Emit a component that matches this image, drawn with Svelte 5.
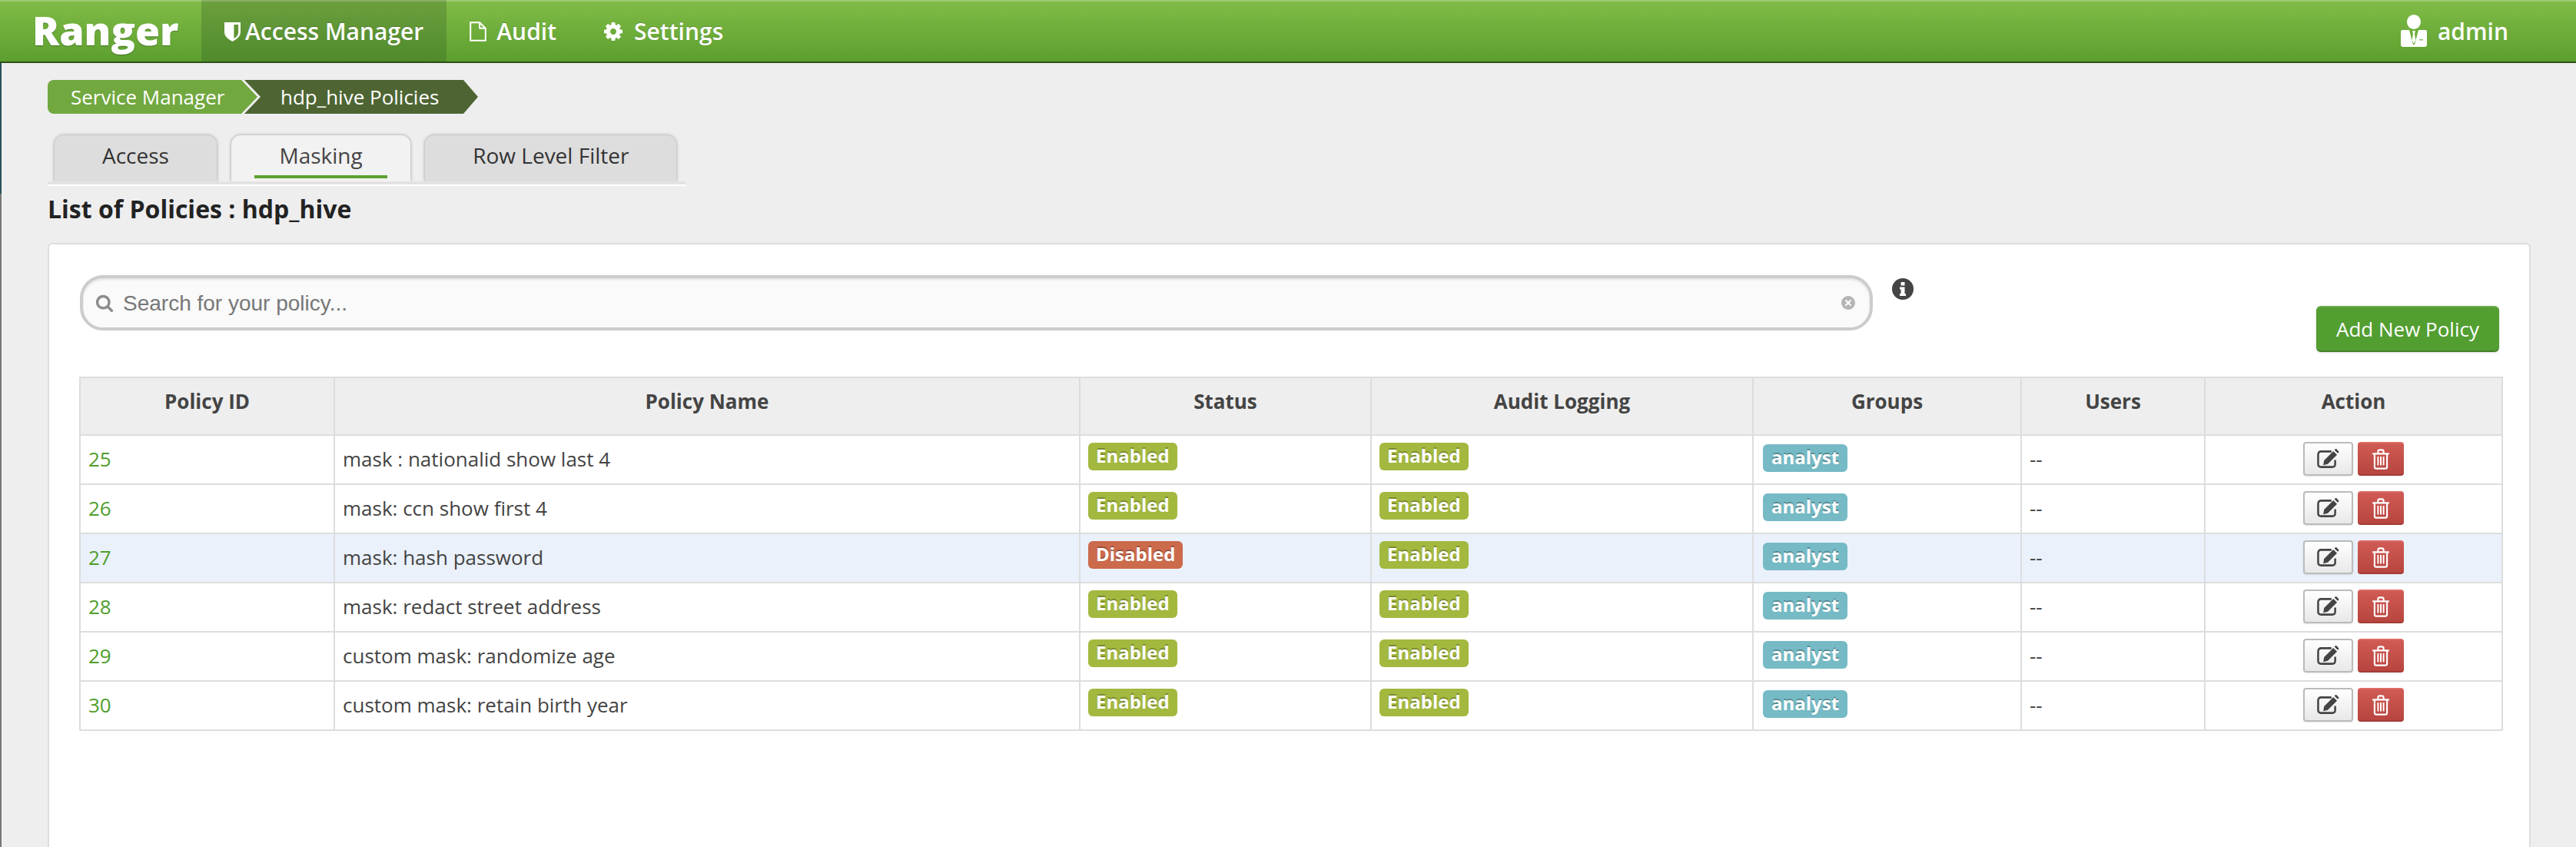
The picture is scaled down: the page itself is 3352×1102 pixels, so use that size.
<script>
  const policies = [
    { id: 25, name: 'mask : nationalid show last 4', enabled: true },
    { id: 26, name: 'mask: ccn show first 4', enabled: true },
    { id: 27, name: 'mask: hash password', enabled: false },
    { id: 28, name: 'mask: redact street address', enabled: true },
    { id: 29, name: 'custom mask: randomize age', enabled: true },
    { id: 30, name: 'custom mask: retain birth year', enabled: true }
  ];
  const columns = [
    { title: 'Policy ID', width: 331 },
    { title: 'Policy Name', width: 970 },
    { title: 'Status', width: 379 },
    { title: 'Audit Logging', width: 497 },
    { title: 'Groups', width: 349 },
    { title: 'Users', width: 239 },
    { title: 'Action', width: 387 }
  ];
  const gear = 'M1152 896q0-106-75-181t-181-75-181 75-75 181 75 181 181 75 181-75 75-181zm512-109v222q0 12-8 23t-20 13l-185 28q-19 54-39 91 35 50 107 138 10 12 10 25t-9 23q-27 37-99 108t-94 71q-12 0-26-9l-138-108q-44 23-91 38-16 136-29 186-7 28-36 28h-222q-14 0-24.5-8.5t-11.5-21.5l-28-184q-49-16-90-37l-141 107q-10 9-25 9-14 0-25-11-126-114-165-168-7-10-7-23 0-12 8-23 15-21 51-66.5t54-70.5q-27-50-41-99l-183-27q-13-2-21-12.5t-8-23.5v-222q0-12 8-23t19-13l186-28q14-46 39-92-40-57-107-138-10-12-10-24 0-10 9-23 26-36 98.5-107.5t94.5-71.5q13 0 26 10l138 107q44-23 91-38 16-136 29-186 7-28 36-28h222q14 0 24.5 8.5t11.5 21.5l28 184q49 16 90 37l142-107q9-9 24-9 13 0 25 10 129 119 165 170 7 8 7 22 0 12-8 23-15 21-51 66.5t-54 70.5q26 50 41 98l183 28q13 2 21 12.5t8 23.5z';
  const lens = 'M1216 832q0-185-131.5-316.5t-316.5-131.5-316.5 131.5-131.5 316.5 131.5 316.5 316.5 131.5 316.5-131.5 131.5-316.5zm512 832q0 52-38 90t-90 38q-54 0-90-38l-343-342q-179 124-399 124-143 0-273.5-55.5t-225-150-150-225-55.5-273.5 55.5-273.5 150-225 225-150 273.5-55.5 273.5 55.5 225 150 150 225 55.5 273.5q0 220-124 399l343 343q37 37 37 90z';
</script>

<div class="page">
  <nav class="navbar">
    <span class="brand">Ranger</span>
    <a class="nav-item active">
      <svg class="ic-shield" viewBox="0 0 22 27"><path fill-rule="evenodd" d="M0 1h22v13c0 6-5 10-11 13C5 24 0 20 0 14zM13 4v19c4-2 6-5 6-9V4z" fill="#fff"/></svg>
      Access Manager
    </a>
    <a class="nav-item">
      <svg class="ic-doc" viewBox="0 0 22 26"><path d="M1.2 1.2h12l7.6 7.6v16H1.2zM13.2 1.2v7.6h7.6" fill="none" stroke="#fff" stroke-width="2"/></svg>
      Audit
    </a>
    <a class="nav-item">
      <svg class="ic-gear" viewBox="0 0 1792 1792"><path d={gear} fill="#fff"/></svg>
      Settings
    </a>
    <span class="user">
      <svg class="ic-user" viewBox="0 0 34 42">
        <ellipse cx="17" cy="9.5" rx="9" ry="9.5" fill="#fff"/>
        <path d="M2 20h9l5 19h2l5-19h9c1 0 2 1 2 2v17c0 2-1 3-3 3H3c-2 0-3-1-3-3V22c0-1 1-2 2-2z" fill="#fff"/>
        <path d="M15 21h4l-1 4 1.4 8L17 38l-2.400-5L16 25z" fill="#fff"/>
        <rect x="24" y="32" width="5" height="1.500" fill="#8dbf62"/>
      </svg>
      admin
    </span>
  </nav>

  <main class="content">
    <div class="crumbs">
      <span class="crumb first">Service Manager</span>
      <span class="crumb last">hdp_hive Policies</span>
    </div>

    <div class="tabs">
      <span class="tab">Access</span>
      <span class="tab selected">Masking</span>
      <span class="tab">Row Level Filter</span>
    </div>

    <h3>List of Policies : hdp_hive</h3>

    <section class="panel">
      <div class="toolbar">
        <div class="search">
          <svg class="ic-lens" viewBox="0 0 1792 1792"><path d={lens} fill="#8c8c8c"/></svg>
          <span class="placeholder">Search for your policy...</span>
          <svg class="ic-clear" viewBox="0 0 20 20">
            <circle cx="10" cy="10" r="9" fill="#b5b5b5"/>
            <path d="M6.500 6.500l7 7M13.500 6.500l-7 7" stroke="#fafafa" stroke-width="2.400"/>
          </svg>
        </div>
        <svg class="ic-info" viewBox="0 0 28 28">
          <circle cx="14" cy="14" r="14" fill="#444"/>
          <rect x="11.500" y="5" width="5" height="4.500" fill="#fff"/>
          <path d="M10 11.500h6.500V20H18v3H10v-3h1.500v-5.500H10z" fill="#fff"/>
        </svg>
        <button class="add">Add New Policy</button>
      </div>

      <table>
        <colgroup>
          {#each columns as col}
            <col style:width="{col.width}px" />
          {/each}
        </colgroup>
        <thead>
          <tr>
            {#each columns as col}
              <th>{col.title}</th>
            {/each}
          </tr>
        </thead>
        <tbody>
          {#each policies as p}
            <tr class:off={!p.enabled}>
              <td><a class="link">{p.id}</a></td>
              <td>{p.name}</td>
              <td class="top">
                <span class="badge {p.enabled ? 'ok' : 'bad'}">{p.enabled ? 'Enabled' : 'Disabled'}</span>
              </td>
              <td class="top"><span class="badge ok">Enabled</span></td>
              <td class="top"><span class="badge info">analyst</span></td>
              <td>--</td>
              <td class="actions">
                <button class="btn-edit" aria-label="Edit">
                  <svg viewBox="0 0 32 28" width="32" height="27">
                    <path d="M21 3.500H7C4.500 3.500 3 5 3 7.500v13C3 23 4.500 24.500 7 24.500h15c2.500 0 4-1.500 4-4V15" fill="none" stroke="#444" stroke-width="2.600"/>
                    <path d="M11 15.500L23.500 3l5 5L16 20.500l-6 1.500zM25 1.500l1-1c.6-.6 1.400-.6 2 0l2.500 2.500c.6.6.6 1.400 0 2l-1 1z" fill="#444"/>
                  </svg>
                </button>
                <button class="btn-del" aria-label="Delete">
                  <svg viewBox="0 0 26 30" width="24" height="27">
                    <path d="M1 7h24M9 7V4c0-1.500 1-2.500 2.500-2.500h3C16 1.500 17 2.500 17 4v3M4 7v19c0 1.500 1 2.500 2.500 2.500h13c1.500 0 2.500-1 2.500-2.500V7" fill="none" stroke="#fff" stroke-width="2.400"/>
                    <path d="M9 11v13M13 11v13M17 11v13" stroke="#fff" stroke-width="2.200"/>
                  </svg>
                </button>
              </td>
            </tr>
          {/each}
        </tbody>
      </table>
    </section>
  </main>
  <div class="edge"></div>
</div>

<style>
  :global(body) {
    margin: 0;
    background: #eee;
    overflow: hidden;
  }
  .page {
    position: relative;
    height: 1102px;
    overflow: hidden;
    font-family: "Open Sans", "Noto Sans", sans-serif;
    color: #444;
    background: #eee;
  }
  .edge {
    position: absolute;
    left: 0;
    top: 82px;
    width: 2px;
    bottom: 0;
    background: linear-gradient(#27505a 0, #27505a 170px, #777 170px);
  }
  .navbar {
    display: flex;
    align-items: stretch;
    height: 80px;
    box-sizing: border-box;
    border-top: 2px solid #9ecb74;
    background: linear-gradient(#80bb46, #5c9f2f);
    box-shadow: 0 2px 0 #2d5016;
    margin-bottom: 2px;
    color: #fff;
    font-size: 30px;
    font-weight: 600;
  }
  .brand {
    width: 220px;
    padding-left: 42px;
    font-size: 52px;
    font-weight: 800;
    line-height: 74px;
    text-shadow: 0 1px 1px rgba(0, 0, 0, 0.3);
  }
  .nav-item {
    display: flex;
    align-items: center;
    padding: 0 30px;
    line-height: 1;
    text-shadow: 0 -1px 0 rgba(0, 0, 0, 0.2);
  }
  .nav-item.active {
    background: linear-gradient(#6c9f3e, #4f8a2b);
    margin-top: -2px;
    border-top: 2px solid #8aae66;
  }
  .ic-shield { width: 21px; height: 26px; margin-right: 6px; }
  .ic-doc { width: 22px; height: 26px; margin-right: 13px; }
  .ic-gear { width: 28px; height: 28px; margin-right: 13px; }
  .user {
    margin-left: auto;
    margin-right: 88px;
    display: flex;
    align-items: center;
    gap: 14px;
    margin-top: -2px;
  }
  .ic-user { width: 34px; height: 42px; }

  .content {
    padding: 22px 59px 0 62px;
  }
  .crumbs {
    display: flex;
    height: 44px;
    font-size: 26px;
    line-height: 44px;
    color: #fff;
  }
  .crumb {
    box-sizing: border-box;
    height: 44px;
    white-space: nowrap;
  }
  .crumb.first {
    width: 273px;
    padding-left: 30px;
    background: #71a83f;
    border-radius: 8px 0 0 8px;
    clip-path: polygon(0 0, 252px 0, 273px 50%, 252px 100%, 0 100%);
  }
  .crumb.last {
    width: 304px;
    margin-left: -17px;
    padding-left: 47px;
    background: #4e6533;
    clip-path: polygon(0 0, 285px 0, 304px 50%, 285px 100%, 0 100%, 21px 50%);
  }
  .tabs {
    display: flex;
    gap: 19.5px;
    width: 830px;
    box-sizing: border-box;
    margin-top: 28px;
    padding-left: 9px;
    height: 66px;
    border-bottom: 2px solid #fff;
    background: linear-gradient(transparent 60px, #e3e3e3 60px);
  }
  .tab {
    box-sizing: border-box;
    height: 60px;
    padding: 0 62px;
    font-size: 28px;
    line-height: 52px;
    color: #333;
    background: #ddd;
    border-radius: 12px 12px 0 0;
    box-shadow: 0 0 4px rgba(0, 0, 0, 0.35);
    clip-path: inset(-6px -6px 0 -6px);
    position: relative;
  }
  .tab.selected {
    background: #f2f2f2;
    color: #444;
  }
  .tab.selected::after {
    content: '';
    position: absolute;
    left: 30px;
    right: 30px;
    bottom: 4px;
    height: 4px;
    background: #5ca22f;
  }
  h3 {
    margin: 0;
    height: 74px;
    font-size: 32px;
    font-weight: 700;
    line-height: 60px;
    color: #222;
  }
  .panel {
    box-sizing: border-box;
    height: 900px;
    padding: 40px 0 0 40px;
    background: #fff;
    border: 2px solid #ddd;
    border-radius: 6px;
  }
  .toolbar {
    display: flex;
    height: 100px;
    margin-bottom: 32px;
    width: 3148px;
  }
  .search {
    box-sizing: border-box;
    display: flex;
    align-items: center;
    width: 2333px;
    height: 72px;
    padding: 0 18px 0 16px;
    background: #fafafa;
    border: 4px solid #ccc;
    border-radius: 30px;
    box-shadow: inset 0 2px 3px rgba(0, 0, 0, 0.1);
    font-family: "Liberation Sans", sans-serif;
    font-size: 28px;
    color: #777;
  }
  .ic-lens { width: 24px; height: 24px; margin-right: 12px; }
  .placeholder { flex: 1; padding-top: 2px; }
  .ic-clear { width: 20px; height: 20px; }
  .ic-info {
    width: 28px;
    height: 28px;
    margin: 4px 0 0 25px;
  }
  .add {
    margin: auto 0 0 auto;
    box-sizing: border-box;
    width: 238px;
    height: 60px;
    padding: 0;
    color: #fff;
    font-family: inherit;
    font-size: 26px;
    font-weight: 400;
    background: #529e31;
    border: 0;
    border-top: 2px solid #6aaa4c;
    border-bottom: 2px solid #437f2a;
    border-radius: 6px;
    box-shadow: 0 1px 3px rgba(0, 0, 0, 0.15);
  }
  table {
    width: 3150px;
    margin-left: -1px;
    table-layout: fixed;
    border-collapse: collapse;
    font-size: 26px;
  }
  th, td {
    border: 2px solid #ddd;
    padding: 0 10px;
  }
  th {
    height: 75px;
    box-sizing: border-box;
    padding-bottom: 14px;
    background: #eee;
    font-weight: 700;
    text-align: center;
  }
  td {
    box-sizing: border-box;
    height: 64px;
    padding-bottom: 2px;
  }
  td.top {
    vertical-align: top;
    padding-top: 9px;
    padding-bottom: 0;
  }
  tr.off td {
    background: #eaf1fb;
  }
  .link {
    color: #4f9e2c;
  }
  .badge {
    display: block;
    width: fit-content;
    height: 36px;
    padding: 0 10px;
    border-radius: 6px;
    color: #fff;
    font-size: 24px;
    font-weight: 700;
    line-height: 34px;
    text-shadow: 0 -2px 0 rgba(0, 0, 0, 0.25);
  }
  .badge.ok { background: #a3b83f; }
  .badge.bad { background: #cc6a4c; }
  .badge.info { background: #75bac5; margin: 2px 0 0 2px; padding: 0 11px; }
  .actions {
    text-align: center;
    white-space: nowrap;
  }
  .actions button {
    box-sizing: border-box;
    display: inline-flex;
    align-items: center;
    justify-content: center;
    vertical-align: middle;
    height: 44px;
    padding: 0;
    border-radius: 4px;
  }
  .btn-edit {
    width: 65px;
    border: 2px solid #bbb;
    background: linear-gradient(#fff, #e8e8e8);
    box-shadow: 0 1px 2px rgba(0, 0, 0, 0.1);
  }
  .btn-del {
    width: 60px;
    border: 0;
    border-top: 2px solid #dd6a64;
    border-bottom: 2px solid #a33c36;
    background: linear-gradient(#d05a54, #b8453f);
  }
</style>
